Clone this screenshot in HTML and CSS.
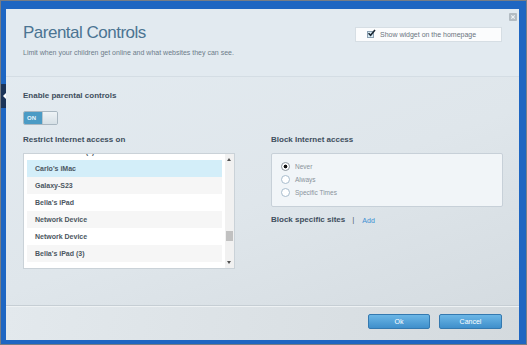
FILE: index.html
```html
<!DOCTYPE html>
<html lang="en">
<head>
    <meta charset="UTF-8">
    <meta name="viewport" content="width=device-width, initial-scale=1.0">
    <title>Parental Controls</title>
    <link rel="stylesheet" href="styles.css">
</head>
<body>
    <div class="frame">
        <div class="side-tab"></div>
        <div class="dialog">
            <div class="close-btn">
                <svg width="8" height="8" viewBox="0 0 8 8"><rect width="8" height="8" rx="1" fill="#b3bcc3"/><path d="M2.3 2.3L5.7 5.7M5.7 2.3L2.3 5.7" stroke="#eef2f5" stroke-width="1.2"/></svg>
            </div>
            <div class="dlg-head">
                <div class="titles">
                    <h1>Parental Controls</h1>
                    <p class="sub">Limit when your children get online and what websites they can see.</p>
                </div>
                <div class="widget-opt">
                    <span class="chk">
                        <svg width="9" height="8" viewBox="0 0 9 8"><path d="M1.5 4.2L3.6 6.3L8 1" stroke="#1d2a36" stroke-width="1.6" fill="none"/></svg>
                    </span>
                    <span>Show widget on the homepage</span>
                </div>
            </div>
            <div class="dlg-body">
                <div class="label">Enable parental controls</div>
                <div class="toggle"><span class="on">ON</span><span class="knob"></span></div>
                <div class="cols">
                    <div class="col-left">
                        <div class="label">Restrict Internet access on</div>
                        <div class="listbox">
                            <div class="rows">
                                <div class="row">Carlo's iPhone (2)</div>
                                <div class="row selected">Carlo's iMac</div>
                                <div class="row alt">Galaxy-S23</div>
                                <div class="row">Bella's iPad</div>
                                <div class="row alt">Network Device</div>
                                <div class="row">Network Device</div>
                                <div class="row alt">Bella's iPad (3)</div>
                                <div class="row">Guest</div>
                            </div>
                            <div class="scroll">
                                <span class="arrow up"></span>
                                <span class="thumb"></span>
                                <span class="arrow down"></span>
                            </div>
                        </div>
                    </div>
                    <div class="col-right">
                        <div class="label">Block Internet access</div>
                        <div class="radio-box">
                            <div class="radio-row"><span class="radio checked"></span>Never</div>
                            <div class="radio-row"><span class="radio"></span>Always</div>
                            <div class="radio-row"><span class="radio"></span>Specific Times</div>
                        </div>
                        <div class="sites">
                            <span class="label">Block specific sites</span>
                            <span class="bar">|</span>
                            <a class="add">Add</a>
                        </div>
                    </div>
                </div>
            </div>
            <div class="dlg-foot">
                <div class="btn">Ok</div>
                <div class="btn">Cancel</div>
            </div>
        </div>
    </div>
</body>
</html>
```

FILE: styles.css
```css
*{margin: 0; padding: 0; box-sizing: border-box;}
body{
    font-family: "Liberation Sans", Arial, sans-serif;
}
.frame{
    width: 527px;
    height: 345px;
    border: 1px solid #767d86;
    background-color: #1e66c2;
    padding: 8px 7px 4px 5px;
    position: relative;
}
/* dark tab on the left edge, behind the dialog */
.side-tab{
    position: absolute;
    left: 0;
    top: 83px;
    width: 5px;
    height: 24px;
    background-color: #1b3459;
}
.side-tab::after{
    content: "";
    position: absolute;
    right: 0;
    top: 9px;
    border-right: 3px solid #fff;
    border-top: 3px solid transparent;
    border-bottom: 3px solid transparent;
}
.dialog{
    width: 513px;
    height: 331px;
    display: flex;
    flex-direction: column;
    position: relative;
    background: linear-gradient(160deg, #e4ecf2 0%, #dfe6eb 55%, #d3dadf 100%);
}
.close-btn{
    position: absolute;
    top: 4px;
    right: 2px;
    width: 8px;
    height: 8px;
    line-height: 0;
}
.dlg-head{
    height: 68px;
    padding: 14px 17px 0 17px;
    display: flex;
    justify-content: space-between;
    align-items: flex-start;
    border-bottom: 1px solid #d4dde4;
    background-color: #e2eaf0;
}
.titles h1{
    font-size: 17px;
    line-height: 20px;
    font-weight: normal;
    letter-spacing: -0.5px;
    color: #4b7492;
}
.titles .sub{
    margin-top: 5px;
    font-size: 7px;
    line-height: 10px;
    color: #6c7c8a;
}
.widget-opt{
    margin-top: 4px;
    width: 147px;
    height: 15px;
    background-color: #fbfcfd;
    border: 1px solid #d6dee4;
    display: flex;
    align-items: center;
    padding-left: 11px;
    gap: 6px;
    font-size: 7px;
    color: #6a747d;
}
.chk{
    width: 7px;
    height: 7px;
    background-color: #d9ecf6;
    border: 1px solid #8aa0b2;
    position: relative;
}
.chk svg{
    position: absolute;
    left: -1px;
    top: -3px;
}
.dlg-body{
    flex: 1;
    padding: 14px 16px 0 17px;
}
.label{
    font-size: 8px;
    line-height: 10px;
    font-weight: bold;
    color: #3e4e5d;
}
.toggle{
    margin-top: 10px;
    width: 35px;
    height: 14px;
    border: 1px solid #a9b7c1;
    border-radius: 2px;
    display: flex;
    overflow: hidden;
}
.toggle .on{
    width: 18px;
    background-color: #4b9bc5;
    color: #e8f4fa;
    font-size: 6px;
    font-weight: bold;
    line-height: 12px;
    padding-left: 3px;
}
.toggle .knob{
    flex: 1;
    background: linear-gradient(#eef3f6, #d6e0e6);
    border-left: 1px solid #b8c6cf;
}
.cols{
    margin-top: 10px;
    display: flex;
    gap: 36px;
}
.col-left{
    width: 212px;
}
.col-right{
    width: 232px;
}
.listbox{
    margin-top: 8px;
    height: 116px;
    border: 1px solid #cad2d8;
    background-color: #fff;
    display: flex;
    overflow: hidden;
}
.rows{
    width: 200px;
    padding-left: 3px;
    overflow: hidden;
}
.row{
    height: 17px;
    line-height: 17px;
    padding-left: 8px;
    font-size: 7px;
    font-weight: bold;
    color: #4b5661;
    background-color: #fff;
}
.row:first-child{
    margin-top: -11px;
}
.row.alt{
    background-color: #f6f6f6;
}
.row.selected{
    background-color: #d3eef9;
}
.scroll{
    margin-left: 3px;
    width: 9px;
    background-color: #f1f1f1;
    position: relative;
}
.arrow{
    position: absolute;
    left: 2px;
    border-left: 2.5px solid transparent;
    border-right: 2.5px solid transparent;
}
.arrow.up{
    top: 4px;
    border-bottom: 3px solid #505050;
}
.arrow.down{
    bottom: 4px;
    border-top: 3px solid #505050;
}
.thumb{
    position: absolute;
    left: 1px;
    top: 77px;
    width: 7px;
    height: 10px;
    background-color: #c1c1c1;
}
.radio-box{
    margin-top: 8px;
    height: 54px;
    border: 1px solid #c7d0d8;
    border-radius: 2px;
    background-color: #f1f5f8;
    padding: 6px 0 0 9px;
}
.radio-row{
    height: 13px;
    display: flex;
    align-items: center;
    gap: 5px;
    font-size: 6.5px;
    color: #89939b;
}
.radio{
    width: 9px;
    height: 9px;
    border-radius: 50%;
    border: 1px solid #a7bccd;
    background-color: #fff;
}
.radio.checked{
    border-color: #8e979e;
    background: radial-gradient(circle, #111 0, #111 1.6px, #fff 2.2px);
}
.sites{
    margin-top: 8px;
    display: flex;
    align-items: center;
    gap: 7px;
}
.sites .bar{
    font-size: 8px;
    line-height: 10px;
    color: #5a6672;
}
.sites .add{
    font-size: 7px;
    color: #3b8ed2;
    margin-left: 1px;
}
.dlg-foot{
    height: 35px;
    border-top: 1px solid #c6ced4;
    box-shadow: inset 0 1px 0 #eef2f4;
    display: flex;
    justify-content: flex-end;
    gap: 9px;
    padding: 8px 17px 0 0;
    background: linear-gradient(100deg, #e3e9ed, #d4dade);
}
.btn{
    width: 62px;
    height: 15px;
    line-height: 13px;
    text-align: center;
    font-size: 7px;
    color: #fff;
    border: 1px solid #3479b0;
    border-radius: 2px;
    background: linear-gradient(#6bb6e6, #3f8fcb);
}
.btn + .btn{
    width: 63px;
}
```
